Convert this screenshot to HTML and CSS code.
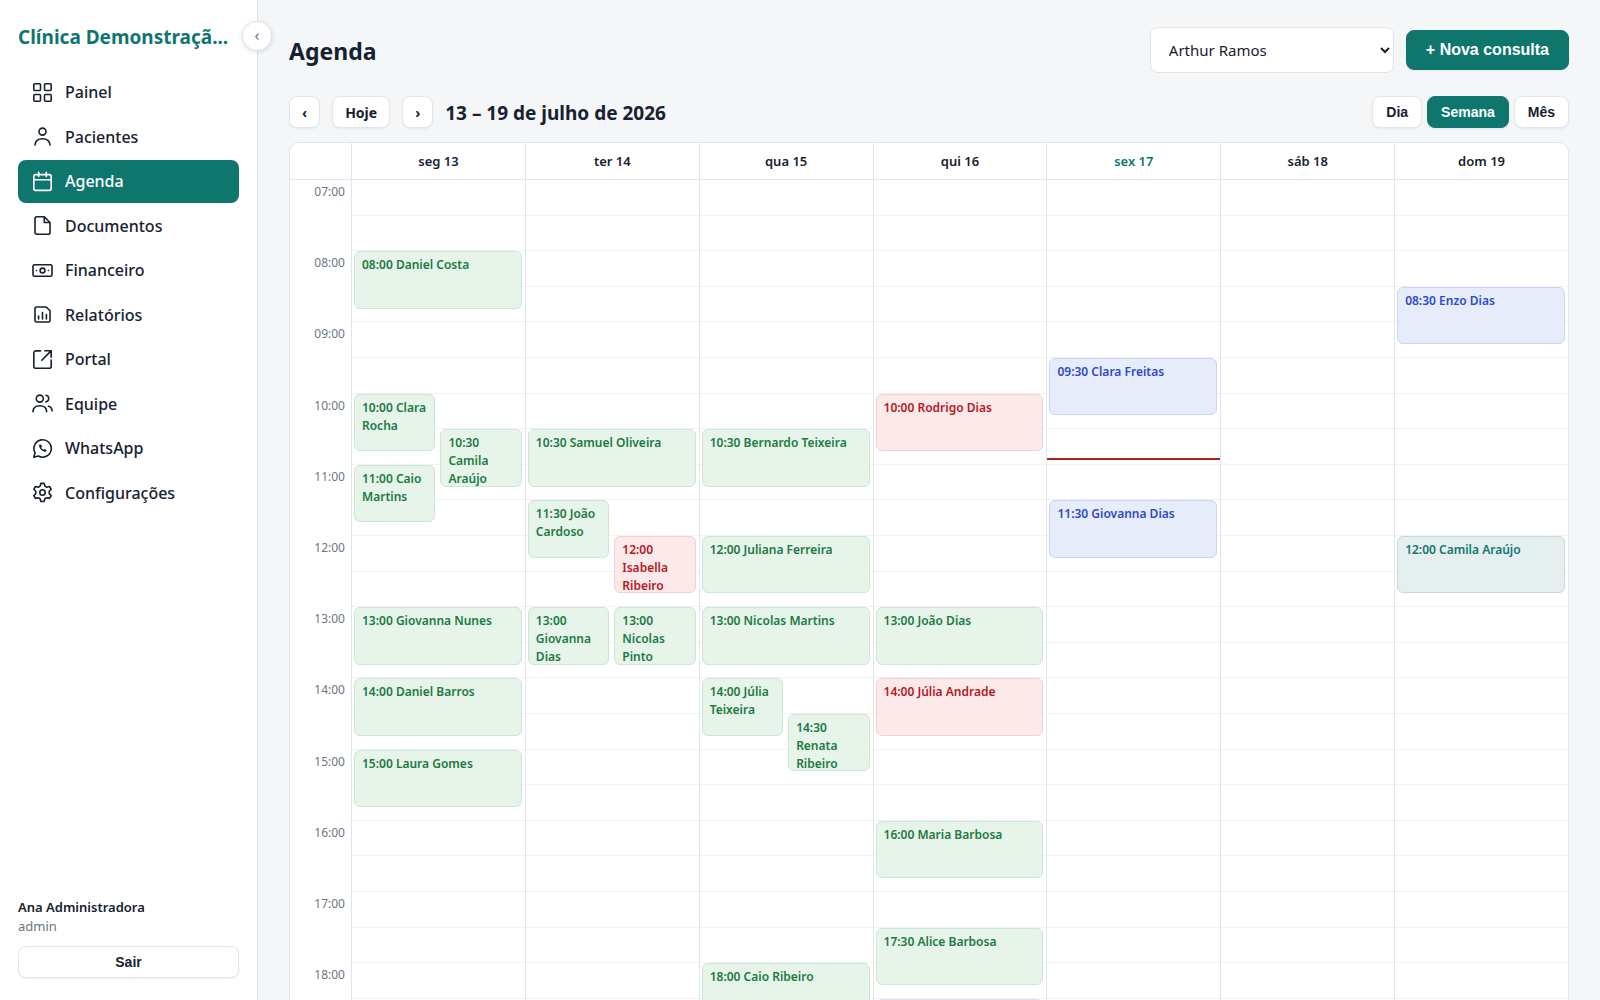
FILE: index.html
```html
<!DOCTYPE html>
<html lang="pt-BR">
<head>
  <meta charset="utf-8">
  <meta name="viewport" content="width=device-width, initial-scale=1">
  <title>Agenda</title>
  <link rel="stylesheet" href="styles.css">
</head>
<body>
  <aside class="sidebar">
    <div class="brand">Clínica Demonstraçã...</div>
    <button type="button" class="collapse" aria-label="Recolher menu">‹</button>

    <nav class="nav">
      <a href="#" class="nav-item">
        <svg class="icon" viewBox="0 0 21 21"><rect x="1.8" y="1.8" width="6.7" height="6.7" rx="1"/><rect x="12.5" y="1.8" width="6.7" height="6.7" rx="1"/><rect x="1.8" y="12.5" width="6.7" height="6.7" rx="1"/><rect x="12.5" y="12.5" width="6.7" height="6.7" rx="1"/></svg>
        Painel
      </a>
      <a href="#" class="nav-item">
        <svg class="icon" viewBox="0 0 21 21"><circle cx="10.5" cy="5.6" r="3.5"/><path d="M3 19c.3-4 3.3-6.3 7.5-6.3s7.2 2.3 7.500 6.300"/></svg>
        Pacientes
      </a>
      <a href="#" class="nav-item active" aria-current="page">
        <svg class="icon" viewBox="0 0 21 21"><rect x="1.8" y="3.6" width="17.4" height="15.8" rx="1.8"/><path d="M1.8 8.7h17.4M6.7 1.4v4M14.3 1.4v4"/></svg>
        Agenda
      </a>
      <a href="#" class="nav-item">
        <svg class="icon" viewBox="0 0 21 21"><path d="M12.3 1.8H4.8A1.8 1.8 0 0 0 3 3.6v13.8a1.8 1.8 0 0 0 1.8 1.8h11.4a1.8 1.8 0 0 0 1.8-1.8V7.5zM12.3 1.8v5.7H18"/></svg>
        Documentos
      </a>
      <a href="#" class="nav-item">
        <svg class="icon" viewBox="0 0 21 21"><rect x="1" y="4.8" width="19" height="11.4" rx="1.5"/><circle cx="10.5" cy="10.5" r="2.4"/><path d="M4.5 10.5h.1M16.4 10.5h.1"/></svg>
        Financeiro
      </a>
      <a href="#" class="nav-item">
        <svg class="icon" viewBox="0 0 21 21"><path d="M14.2 3H4.5A1.5 1.5 0 0 0 3 4.5v12A1.5 1.5 0 0 0 4.5 18h12a1.5 1.5 0 0 0 1.5-1.5V6.8zM6.6 15v-3M10.5 15V8.5M14.4 15v-4.5"/></svg>
        Relatórios
      </a>
      <a href="#" class="nav-item">
        <svg class="icon" viewBox="0 0 21 21"><path d="M8.5 1.9H3.8a2 2 0 0 0-2 2v13.3a2 2 0 0 0 2 2h13.4a2 2 0 0 0 2-2V11M9.8 11.2l9.3-9.3M12.8 1.8h6.4v6.4"/></svg>
        Portal
      </a>
      <a href="#" class="nav-item">
        <svg class="icon" viewBox="0 0 21 21"><circle cx="7.8" cy="5.6" r="3.5"/><path d="M1 18.8c0-3.8 2.8-6 6.8-6s6.8 2.2 6.8 6M14 2.3c3.6.6 3.6 6 0 6.6M16.5 13.3c2.3.7 3.6 2.2 3.6 4.7"/></svg>
        Equipe
      </a>
      <a href="#" class="nav-item">
        <svg class="icon" viewBox="0 0 21 21"><path d="M1.8 19.2l1.3-4.4a8.7 8.7 0 1 1 3.200 3.200z"/><path d="M7.200 6.600c-.8 3.500 3.300 7.700 6.800 7l.6-1.500-2.200-1.200-1 .9c-1-.4-1.800-1.200-2.200-2.200l.9-1-1.100-2.200z" fill="currentColor" stroke="none"/></svg>
        WhatsApp
      </a>
      <a href="#" class="nav-item">
        <svg class="icon" viewBox="0 0 21 21"><path d="M8.1 4.1L8.900 1.400h3.200l.8 2.700 1.900 1.100 2.800-.7 1.600 2.800-2 2v2.300l2 2-1.600 2.800-2.800-.7-1.900 1.100-.8 2.700H8.900l-.8-2.700-1.900-1.100-2.800.7-1.600-2.800 2-2V9.300l-2-2 1.600-2.800 2.800.7z"/><circle cx="10.500" cy="10.500" r="2.700"/></svg>
        Configurações
      </a>
    </nav>

    <div class="account">
      <div class="account-name">Ana Administradora</div>
      <div class="account-role">admin</div>
      <button type="button" class="btn btn-small">Sair</button>
    </div>
  </aside>

  <main class="main">
    <header class="page-header">
      <h1>Agenda</h1>
      <div class="page-actions">
        <select class="professional" aria-label="Profissional">
          <option>Arthur Ramos</option>
        </select>
        <button type="button" class="btn btn-primary">+ Nova consulta</button>
      </div>
    </header>

    <div class="toolbar">
      <div class="period">
        <button type="button" class="btn btn-small btn-nav" aria-label="Semana anterior">‹</button>
        <button type="button" class="btn btn-small btn-nav">Hoje</button>
        <button type="button" class="btn btn-small btn-nav" aria-label="Próxima semana">›</button>
        <h2>13 – 19 de julho de 2026</h2>
      </div>
      <div class="views">
        <button type="button" class="btn btn-small">Dia</button>
        <button type="button" class="btn btn-small btn-primary">Semana</button>
        <button type="button" class="btn btn-small">Mês</button>
      </div>
    </div>

    <section class="calendar">
      <div class="cal-row cal-head">
        <div></div>
        <div class="day-name">seg 13</div>
        <div class="day-name">ter 14</div>
        <div class="day-name">qua 15</div>
        <div class="day-name">qui 16</div>
        <div class="day-name today">sex 17</div>
        <div class="day-name">sáb 18</div>
        <div class="day-name">dom 19</div>
      </div>

      <div class="cal-row cal-body">
        <div class="hours">
          <span>07:00</span><span>08:00</span><span>09:00</span><span>10:00</span><span>11:00</span>
          <span>12:00</span><span>13:00</span><span>14:00</span><span>15:00</span><span>16:00</span>
          <span>17:00</span><span>18:00</span><span>19:00</span><span>20:00</span><span>21:00</span>
        </div>

        <!-- half-hour lines behind the days -->
        <div class="slots">
          <i></i><i></i><i></i><i></i><i></i><i></i><i></i><i></i><i></i><i></i>
          <i></i><i></i><i></i><i></i><i></i><i></i><i></i><i></i><i></i><i></i>
          <i></i><i></i><i></i><i></i><i></i><i></i><i></i><i></i><i></i><i></i>
        </div>

        <!-- --start is counted in 10 minute rows from 07:00 -->
        <div class="day day-1">
          <div class="event done" style="--start: 7">08:00 Daniel Costa</div>
          <div class="event done left" style="--start: 19">10:00 Clara Rocha</div>
          <div class="event done right" style="--start: 22">10:30 Camila Araújo</div>
          <div class="event done left" style="--start: 25">11:00 Caio Martins</div>
          <div class="event done" style="--start: 37">13:00 Giovanna Nunes</div>
          <div class="event done" style="--start: 43">14:00 Daniel Barros</div>
          <div class="event done" style="--start: 49">15:00 Laura Gomes</div>
        </div>
        <div class="day day-2">
          <div class="event done" style="--start: 22">10:30 Samuel Oliveira</div>
          <div class="event done left" style="--start: 28">11:30 João Cardoso</div>
          <div class="event missed right" style="--start: 31">12:00 Isabella Ribeiro</div>
          <div class="event done left" style="--start: 37">13:00 Giovanna Dias</div>
          <div class="event done right" style="--start: 37">13:00 Nicolas Pinto</div>
        </div>
        <div class="day day-3">
          <div class="event done" style="--start: 22">10:30 Bernardo Teixeira</div>
          <div class="event done" style="--start: 31">12:00 Juliana Ferreira</div>
          <div class="event done" style="--start: 37">13:00 Nicolas Martins</div>
          <div class="event done left" style="--start: 43">14:00 Júlia Teixeira</div>
          <div class="event done right" style="--start: 46">14:30 Renata Ribeiro</div>
          <div class="event done" style="--start: 67">18:00 Caio Ribeiro</div>
        </div>
        <div class="day day-4">
          <div class="event missed" style="--start: 19">10:00 Rodrigo Dias</div>
          <div class="event done" style="--start: 37">13:00 João Dias</div>
          <div class="event missed" style="--start: 43">14:00 Júlia Andrade</div>
          <div class="event done" style="--start: 55">16:00 Maria Barbosa</div>
          <div class="event done" style="--start: 64">17:30 Alice Barbosa</div>
          <div class="event canceled" style="--start: 70"></div>
        </div>
        <div class="day day-5">
          <div class="event booked" style="--start: 16">09:30 Clara Freitas</div>
          <div class="event booked" style="--start: 28">11:30 Giovanna Dias</div>
          <div class="now" style="top: 26%"></div>
        </div>
        <div class="day day-6"></div>
        <div class="day day-7">
          <div class="event booked" style="--start: 10">08:30 Enzo Dias</div>
          <div class="event confirmed" style="--start: 31">12:00 Camila Araújo</div>
        </div>
      </div>
    </section>
  </main>
</body>
</html>
```

FILE: styles.css
```css
:root {
  --primary: #0f766e;
  --text: #17212f;
  --muted: #6b7688;
  --border: #e2e6eb;
  --bg: #f4f6f8;
}

* {
  box-sizing: border-box;
}

body {
  margin: 0;
  height: 100vh;
  display: flex;
  overflow: hidden;
  font-family: "Noto Sans", "Open Sans", sans-serif;
  font-size: 16px;
  color: var(--text);
  background: var(--bg);
}

h1,
h2 {
  margin: 0;
  padding-top: 2px;
}

/* Sidebar */
.sidebar {
  position: relative;
  flex: 0 0 258px;
  display: flex;
  flex-direction: column;
  padding: 22px 18px;
  background: #fff;
  border-right: 1px solid var(--border);
}

.brand {
  margin-bottom: 19px;
  font-size: 19px;
  line-height: 30px;
  font-weight: 700;
  color: var(--primary);
  white-space: nowrap;
  overflow: hidden;
}

.collapse {
  position: absolute;
  top: 21px;
  right: -15px;
  width: 30px;
  height: 30px;
  padding: 0 0 3px;
  border: 1px solid var(--border);
  border-radius: 50%;
  background: #fff;
  color: var(--muted);
  font-family: inherit;
  font-size: 16px;
  box-shadow: 0 1px 4px rgba(20, 30, 50, 0.15);
  cursor: pointer;
}

.nav {
  display: grid;
  grid-auto-rows: 1fr;
  gap: 2px;
  min-height: 443px;
}

.nav-item {
  display: flex;
  align-items: center;
  gap: 12px;
  padding: 0 14px;
  border-radius: 8px;
  color: var(--text);
  font-weight: 500;
  text-decoration: none;
}

.nav-item.active {
  background: var(--primary);
  color: #fff;
}

.icon {
  flex: none;
  width: 21px;
  height: 21px;
  fill: none;
  stroke: currentColor;
  stroke-width: 1.6;
  stroke-linecap: round;
  stroke-linejoin: round;
}

.account {
  margin-top: auto;
  font-size: 13px;
  line-height: 19px;
}

.account-name {
  font-weight: 600;
}

.account-role {
  color: var(--muted);
}

.account .btn {
  width: 100%;
  margin-top: 10px;
}

/* Buttons */
.btn {
  height: 40px;
  padding: 0 19px;
  border: 1px solid var(--border);
  border-radius: 8px;
  background: #fff;
  color: var(--text);
  font-family: "Liberation Sans", Arial, sans-serif;
  font-size: 16px;
  font-weight: 700;
  box-shadow: 0 1px 2px rgba(20, 30, 50, 0.06);
  cursor: pointer;
}

.btn-small {
  height: 32px;
  padding: 0 13px;
  font-size: 14px;
}

.btn-nav {
  padding: 0 12px;
  font-family: inherit;
}

.btn-primary {
  background: var(--primary);
  border-color: var(--primary);
  color: #fff;
}

/* Main */
.main {
  flex: 1;
  min-width: 0;
  padding: 27px 31px;
  overflow-y: auto;
  scrollbar-width: none;
}

.page-header,
.toolbar,
.page-actions,
.period,
.views {
  display: flex;
  align-items: center;
}

.page-header,
.toolbar {
  justify-content: space-between;
}

.page-header {
  margin-bottom: 23px;
}

.page-header h1 {
  font-size: 23px;
  line-height: 32px;
}

.page-actions,
.period {
  gap: 12px;
}

.professional {
  width: 244px;
  height: 46px;
  padding: 0 14px;
  border: 1px solid var(--border);
  border-radius: 8px;
  background: #fff;
  color: var(--text);
  font-family: inherit;
  font-size: 15px;
}

.toolbar {
  margin-bottom: 14px;
}

.period h2 {
  font-size: 19px;
  line-height: 24px;
}

.views {
  gap: 5px;
}

/* Week grid */
.calendar {
  background: #fff;
  border: 1px solid var(--border);
  border-radius: 10px;
  overflow: hidden;
}

.cal-row {
  display: grid;
  grid-template-columns: 61px repeat(7, minmax(0, 1fr));
}

.cal-head {
  height: 37px;
  border-bottom: 1px solid var(--border);
}

.day-name {
  border-left: 1px solid var(--border);
  font-size: 13px;
  line-height: 37px;
  font-weight: 600;
  text-align: center;
}

.day-name.today {
  color: var(--primary);
}

.cal-body {
  grid-template-rows: minmax(0, 1fr);
  height: 1068px;
}

.hours,
.slots,
.day {
  grid-row: 1;
  display: grid;
}

.hours {
  grid-template-rows: repeat(15, minmax(0, 1fr));
  padding-right: 6px;
  color: var(--muted);
  font-size: 12px;
  line-height: 23px;
  text-align: right;
}

.slots {
  grid-column: 2 / -1;
  grid-template-rows: repeat(30, minmax(0, 1fr));
}

.slots i {
  border-bottom: 1px solid #f0f2f5;
}

.day {
  position: relative;
  grid-template-columns: repeat(2, minmax(0, 1fr));
  grid-template-rows: repeat(90, minmax(0, 1fr));
  column-gap: 5px;
  padding: 0 3px 0 2px;
  border-left: 1px solid var(--border);
}

.day-1 { grid-column: 2; }
.day-2 { grid-column: 3; }
.day-3 { grid-column: 4; }
.day-4 { grid-column: 5; }
.day-5 { grid-column: 6; }
.day-6 { grid-column: 7; }
.day-7 { grid-column: 8; }

.event {
  grid-column: 1 / -1;
  grid-row: var(--start) / span 5;
  margin-bottom: 2px;
  padding: 4px 7px;
  border: 1px solid;
  border-radius: 6px;
  font-size: 12px;
  line-height: 18px;
  font-weight: 600;
  overflow: hidden;
}

.event.left {
  grid-column: 1;
}

.event.right {
  grid-column: 2;
}

.done {
  background: #e6f4ea;
  border-color: #cde6d6;
  color: #1b7a41;
}

.missed {
  background: #fceaea;
  border-color: #f5d0d1;
  color: #b4191f;
}

.booked {
  background: #e7ecfb;
  border-color: #cbd5f4;
  color: #2a4bc9;
}

.confirmed {
  background: #e6efef;
  border-color: #c3dcd9;
  color: #0f766e;
}

.canceled {
  background: #eef0f3;
  border-color: #dfe3e8;
  color: var(--muted);
}

.now {
  position: absolute;
  left: 0;
  right: 0;
  height: 2px;
  background: #a8231f;
}
```
